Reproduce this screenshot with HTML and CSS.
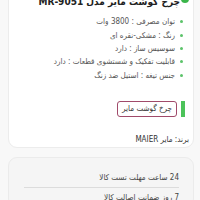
FILE: index.html
```html
<!DOCTYPE html>
<html lang="fa" dir="rtl">
<head>
<meta charset="utf-8">
<link rel="stylesheet" href="styles.css">
</head>
<body>
<div class="page">
  <section class="card main">
    <div class="title-row">
      <span class="mark"></span>
      <h1 class="title">چرخ گوشت مایر مدل MR-9051</h1>
    </div>
    <ul class="specs">
      <li>توان مصرفی : 3800 وات</li>
      <li>رنگ : مشکی-نقره ای</li>
      <li>سوسیس ساز : دارد</li>
      <li>قابلیت تفکیک و شستشوی قطعات : دارد</li>
      <li>جنس تیغه : استیل ضد زنگ</li>
    </ul>
    <div class="tag-row">
      <span class="tag-bar"></span>
      <span class="tag">چرخ گوشت مایر</span>
    </div>
    <p class="brand">برند: مایر MAIER</p>
  </section>
  <section class="card info">
    <div class="info-item">24 ساعت مهلت تست کالا</div>
    <div class="info-item">7 روز ضمانت اصالت کالا</div>
  </section>
</div>
</body>
</html>
```
FILE: styles.css
```css
* { box-sizing: border-box; }
html, body { margin: 0; padding: 0; }
body {
  background: #f8f8f8;
  font-family: "DejaVu Sans Condensed", "DejaVu Sans", sans-serif;
  color: #444;
  width: 200px;
  height: 200px;
  overflow: hidden;
}
.page {
  margin-top: -12px;
  padding: 0 6px 0 8px;
  display: flex;
  flex-direction: column;
  gap: 9px;
}
.card {
  background: #fff;
  border: 1px solid #ececec;
  border-radius: 9px;
}
.main {
  padding: 0 4px 1px 12px;
}
.title-row {
  display: flex;
  align-items: center;
  gap: 1px;
  height: 24px;
}
.mark {
  width: 8px;
  height: 8px;
  border-radius: 50%;
  background: #3bb54a;
  flex: none;
  margin-bottom: 4px;
}
.title {
  margin: 0;
  font-size: 10px;
  font-weight: bold;
  color: #222;
  white-space: nowrap;
}
.specs {
  list-style: none;
  margin: 2px 0 0 0;
  padding: 0 6px 0 0;
  display: flex;
  flex-direction: column;
}
.specs li {
  display: flex;
  align-items: center;
  gap: 5px;
  height: 13.4px;
  font-size: 8px;
  color: #555;
  white-space: nowrap;
}
.specs li::before {
  content: "";
  width: 3px;
  height: 3px;
  border-radius: 50%;
  background: #5cc36a;
  flex: none;
}
.tag-row {
  display: flex;
  align-items: stretch;
  gap: 4px;
  margin-top: 19px;
  padding-right: 4px;
  height: 16px;
}
.tag-bar {
  width: 4px;
  background: #4cc35a;
}
.tag {
  border: 1px solid #a04a6a;
  border-radius: 3px;
  padding: 0 4px;
  font-size: 8px;
  color: #333;
  display: flex;
  align-items: center;
}
.brand {
  margin: 17px 0 0 0;
  line-height: 12px;
  font-size: 8px;
  color: #333;
}
.info {
  background: #f5f5f5;
  border-color: #ebebeb;
  padding: 14px 14px 0 15px;
}
.info-item {
  font-size: 8px;
  line-height: 12px;
  color: #444;
  padding: 0 0 3px 0;
}
.info-item + .info-item {
  border-top: 1px solid #dcdcdc;
  padding-top: 4px;
}
```
